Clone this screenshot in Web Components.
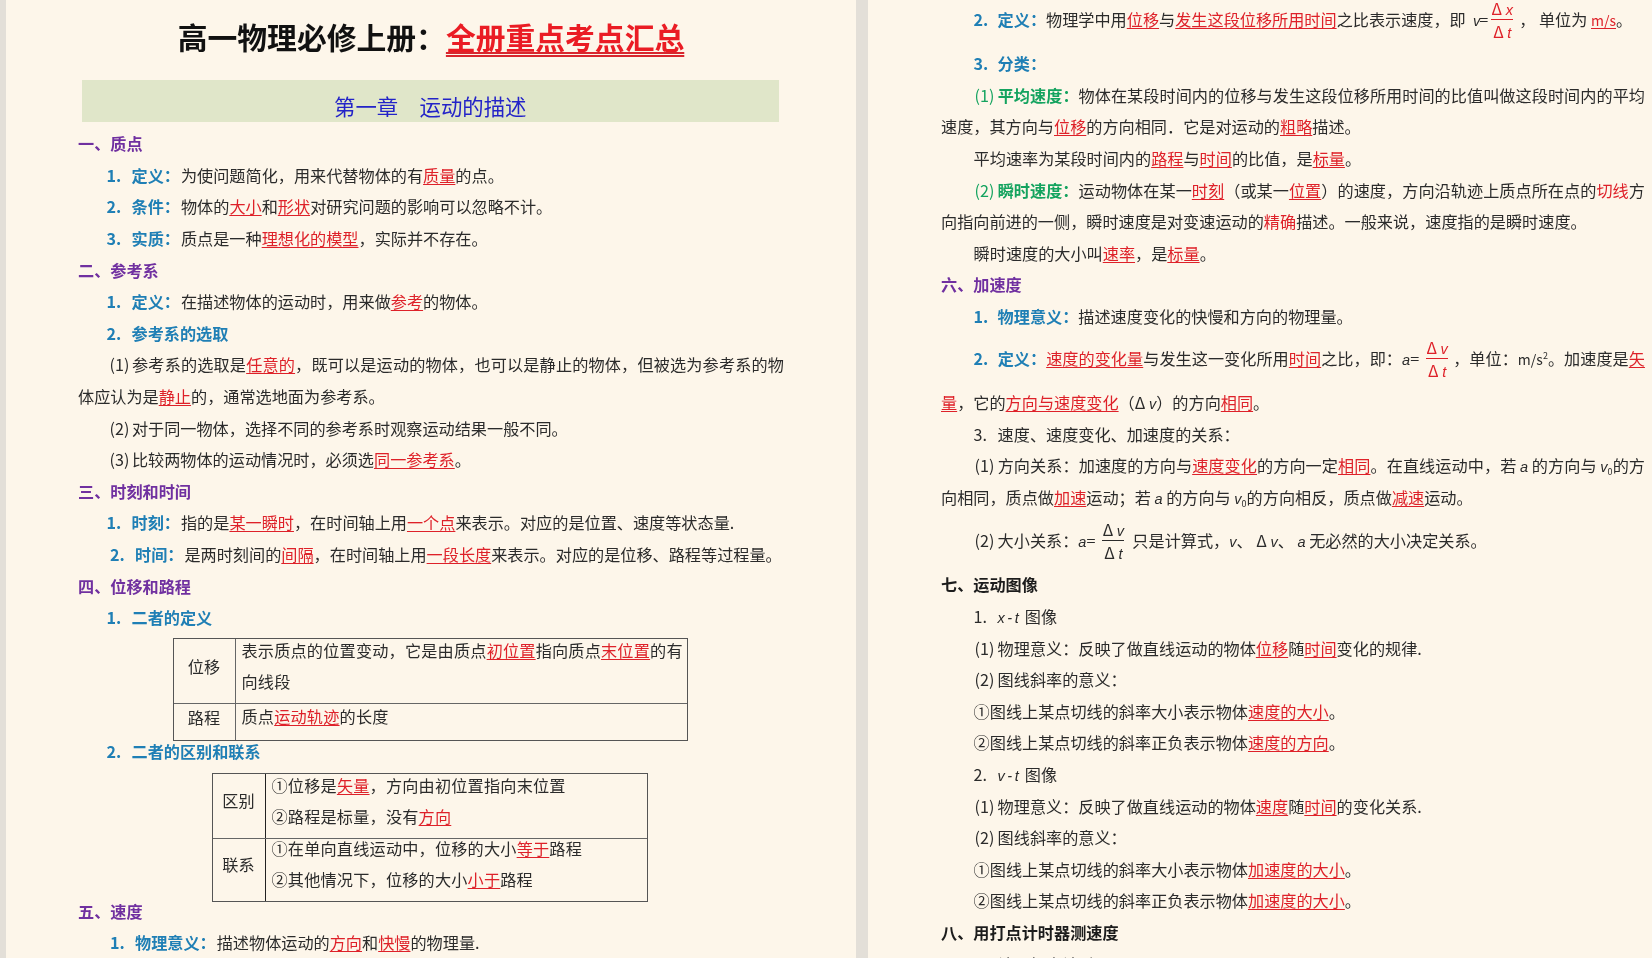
<!DOCTYPE html>
<html lang="zh-CN"><head><meta charset="utf-8"><title>高一物理必修上册</title>
<style>
html,body{margin:0;padding:0;height:958px;overflow:hidden;background:#E3DFD8}
</style></head>
<body>
<script>
function def(name,css,html){
  customElements.define(name,class extends HTMLElement{
    constructor(){super();this.attachShadow({mode:'open'}).innerHTML='<style>'+css+'</style>'+(html||'<slot></slot>');}
  });
}
def('doc-viewer',`:host{display:flex;gap:12px;padding-left:6px;height:958px;overflow:hidden;background:#E3DFD8;
  font-family:"Noto Sans CJK SC","Noto Sans",sans-serif;font-size:16.15px;line-height:31.6px;color:#2b2b2b;filter:blur(.35px)}`);
def('doc-page',`:host{display:block;box-sizing:border-box;background:#FDF6EA;height:958px;overflow:hidden;width:850px;padding:0 72px;--pw:22.4px;--nw:25px;--kg:1px;--pm:0px}
:host([side=right]){width:784px;padding:4.2px 7px 0 73px;--pw:23px;--nw:24px;--kg:0px;--pm:1px}`);
def('doc-title',`:host{display:block;text-align:center;font-size:29.8px;line-height:46px;height:80px;padding-top:13px;box-sizing:border-box;font-weight:700;color:#111;white-space:nowrap}`);
def('chapter-bar',`:host{display:block;margin:0 5px 6.2px 3.5px;height:42px;background:#E0E6C9;text-align:center;color:#2323C8;font-size:21.4px;line-height:52px;white-space:nowrap}`);
def('sec-head',`:host{display:block;font-weight:700;color:#7030A0}:host([tone=black]){color:#1c1c1c}`);
def('item-head',`:host{display:block;font-weight:700;color:#1F7FB5;padding-left:28.5px;white-space:nowrap}`);
def('num-mark',`:host{display:inline-block;width:var(--nw,25px);text-indent:0}`);
def('par-num',`:host{display:inline-block;width:var(--pw,21.6px);margin-left:var(--pm,0);text-indent:0;font-weight:400;white-space:nowrap}`);
def('body-para',`:host{display:block;text-indent:31.5px;white-space:nowrap}
:host([deep]){text-indent:32.6px}
:host([cont]){text-indent:0}
:host([just]){white-space:normal;text-align:justify;text-align-last:justify}`);
def('plain-line',`:host{display:block;padding-left:32.6px;white-space:nowrap}`);
def('lead-item',`:host{display:block;padding-left:28.5px;white-space:nowrap}:host([nudge]){padding-left:32px}:host([deep]){padding-left:32.6px}`);
def('blue-key',`:host{font-weight:700;color:#1F7FB5;margin-right:var(--kg,0)}`);
def('green-key',`:host{font-weight:700;color:#14A35F}`);
def('red-key',`:host{color:#DE2129;text-decoration:underline;text-decoration-thickness:1px;text-underline-offset:2px}
:host([bare]){text-decoration:none}`);
def('unit-sm',`:host{font-size:14px}`);
def('math-i',`:host{font-style:italic;font-family:"Liberation Sans",sans-serif;line-height:0;font-size:14.5px}
:host([wide]){letter-spacing:2.5px}:host([tight]){letter-spacing:-1px}`);
def('double-red',`:host{color:#EA1C24;text-decoration:underline double #D8262E;text-decoration-thickness:1.6px;text-underline-offset:3px}`);
def('frac-box',`:host{display:inline-flex;flex-direction:column;vertical-align:middle;text-align:center;width:22px;margin:-9px 1px -5px;line-height:22px;font-size:16px;text-indent:0;text-align-last:center}
:host([red]){color:#DE2129}
.n{border-bottom:1px solid currentColor}.n,.d{height:22px;white-space:nowrap}`,
`<div class="n"><slot name="n"></slot></div><div class="d"><slot name="d"></slot></div>`);
def('kv-table',`:host{display:block;box-sizing:border-box;border:1px solid #555;white-space:nowrap}`);
def('kv-label',`:host{display:block;text-align:center;border-right:1px solid var(--kb,#666);padding-top:var(--lp,0);height:100%;box-sizing:border-box;padding-right:1px}`);
def('kv-cell',`:host{display:block;padding-left:var(--cp,5.5px);margin-top:var(--ct,-4px);height:0;letter-spacing:.2px}`);
def('kv-row',`:host{display:grid;grid-template-columns:var(--kc);height:var(--rh);border-top:1px solid #666;box-sizing:border-box}:host(:first-child){border-top:0}`);
def('sup-sm',`:host{font-size:9px;vertical-align:6px;line-height:0}`);
def('sub-sm',`:host{font-size:9px;vertical-align:-3px;line-height:0}`);
</script>
<doc-viewer>
<doc-page>
  <doc-title>高一物理必修上册：<double-red>全册重点考点汇总</double-red></doc-title>
  <chapter-bar>第一章　运动的描述</chapter-bar>
  <sec-head>一、质点</sec-head>
  <lead-item><blue-key><num-mark>1.</num-mark>定义：</blue-key>为使问题简化，用来代替物体的有<red-key>质量</red-key>的点。</lead-item>
  <lead-item><blue-key><num-mark>2.</num-mark>条件：</blue-key>物体的<red-key>大小</red-key>和<red-key>形状</red-key>对研究问题的影响可以忽略不计。</lead-item>
  <lead-item><blue-key><num-mark>3.</num-mark>实质：</blue-key>质点是一种<red-key>理想化的模型</red-key>，实际并不存在。</lead-item>
  <sec-head>二、参考系</sec-head>
  <lead-item><blue-key><num-mark>1.</num-mark>定义：</blue-key>在描述物体的运动时，用来做<red-key>参考</red-key>的物体。</lead-item>
  <item-head><num-mark>2.</num-mark>参考系的选取</item-head>
  <body-para just><par-num>(1)</par-num>参考系的选取是<red-key>任意的</red-key>，既可以是运动的物体，也可以是静止的物体，但被选为参考系的物</body-para>
  <body-para cont>体应认为是<red-key>静止</red-key>的，通常选地面为参考系。</body-para>
  <body-para><par-num>(2)</par-num>对于同一物体，选择不同的参考系时观察运动结果一般不同。</body-para>
  <body-para><par-num>(3)</par-num>比较两物体的运动情况时，必须选<red-key>同一参考系</red-key>。</body-para>
  <sec-head>三、时刻和时间</sec-head>
  <lead-item><blue-key><num-mark>1.</num-mark>时刻：</blue-key>指的是<red-key>某一瞬时</red-key>，在时间轴上用<red-key>一个点</red-key>来表示。对应的是位置、速度等状态量.</lead-item>
  <lead-item nudge><blue-key><num-mark>2.</num-mark>时间：</blue-key>是两时刻间的<red-key>间隔</red-key>，在时间轴上用<red-key>一段长度</red-key>来表示。对应的是位移、路程等过程量。</lead-item>
  <sec-head>四、位移和路程</sec-head>
  <item-head><num-mark>1.</num-mark>二者的定义</item-head>
  <kv-table style="--kc:62px 1fr;margin:4.2px 96px -5.1px 95px;width:515px">
    <kv-row style="--rh:63.7px"><kv-label style="--lp:12px">位移</kv-label><kv-cell>表示质点的位置变动，它是由质点<red-key>初位置</red-key>指向质点<red-key>末位置</red-key>的有<br>向线段</kv-cell></kv-row>
    <kv-row style="--rh:37.3px;--ct:-3px"><kv-label style="--lp:0;line-height:26px">路程</kv-label><kv-cell>质点<red-key>运动轨迹</red-key>的长度</kv-cell></kv-row>
  </kv-table>
  <item-head><num-mark>2.</num-mark>二者的区别和联系</item-head>
  <kv-table style="--kc:53px 1fr;--kb:#222;margin:5.5px 0 -5.8px 134px;width:436px">
    <kv-row style="--rh:63.7px"><kv-label style="--lp:11px">区别</kv-label><kv-cell>①位移是<red-key>矢量</red-key>，方向由初位置指向末位置<br>②路程是标量，没有<red-key>方向</red-key></kv-cell></kv-row>
    <kv-row style="--rh:63px;--ct:-6px"><kv-label style="--lp:10px">联系</kv-label><kv-cell>①在单向直线运动中，位移的大小<red-key>等于</red-key>路程<br>②其他情况下，位移的大小<red-key>小于</red-key>路程</kv-cell></kv-row>
  </kv-table>
  <sec-head>五、速度</sec-head>
  <lead-item nudge><blue-key><num-mark>1.</num-mark>物理意义：</blue-key>描述物体运动的<red-key>方向</red-key>和<red-key>快慢</red-key>的物理量.</lead-item>
</doc-page>
<doc-page side="right">
  <lead-item deep style="height:31.6px"><blue-key><num-mark>2.</num-mark>定义：</blue-key>物理学中用<red-key>位移</red-key>与<red-key>发生这段位移所用时间</red-key>之比表示速度，即&nbsp;&nbsp;<math-i tight>v</math-i>=<frac-box red style="margin-left:3px;margin-right:6px"><span slot="n">Δ&nbsp;<math-i>x</math-i></span><span slot="d">Δ&nbsp;<math-i>t</math-i></span></frac-box>，&nbsp;单位为 <red-key><unit-sm>m/s</unit-sm></red-key>。</lead-item>
  <lead-item deep style="margin-top:12.5px"><blue-key><num-mark>3.</num-mark>分类：</blue-key></lead-item>
  <body-para deep just><green-key><par-num>(1)</par-num>平均速度：</green-key>物体在某段时间内的位移与发生这段位移所用时间的比值叫做这段时间内的平均</body-para>
  <body-para cont>速度，其方向与<red-key>位移</red-key>的方向相同．它是对运动的<red-key>粗略</red-key>描述。</body-para>
  <body-para deep>平均速率为某段时间内的<red-key>路程</red-key>与<red-key>时间</red-key>的比值，是<red-key>标量</red-key>。</body-para>
  <body-para deep just><green-key><par-num>(2)</par-num>瞬时速度：</green-key>运动物体在某一<red-key>时刻</red-key>（或某一<red-key>位置</red-key>）的速度，方向沿轨迹上质点所在点的<red-key bare>切线</red-key>方</body-para>
  <body-para cont>向指向前进的一侧，瞬时速度是对变速运动的<red-key bare>精确</red-key>描述。一般来说，速度指的是瞬时速度。</body-para>
  <body-para deep>瞬时速度的大小叫<red-key>速率</red-key>，是<red-key>标量</red-key>。</body-para>
  <sec-head>六、加速度</sec-head>
  <lead-item deep><blue-key><num-mark>1.</num-mark>物理意义：</blue-key>描述速度变化的快慢和方向的物理量。</lead-item>
  <body-para deep just style="margin-top:3.2px;line-height:45px;height:44.5px"><blue-key><num-mark>2.</num-mark>定义：</blue-key><red-key>速度的变化量</red-key>与发生这一变化所用<red-key>时间</red-key>之比，即：<math-i>a</math-i>=<frac-box red style="margin-left:7px;margin-right:5px"><span slot="n">Δ&nbsp;<math-i>v</math-i></span><span slot="d">Δ&nbsp;<math-i>t</math-i></span></frac-box>，单位：<unit-sm>m/s</unit-sm><sup-sm>2</sup-sm>。加速度是<red-key>矢</red-key></body-para>
  <body-para cont style="line-height:45px;height:45px"><red-key>量</red-key>，它的<red-key>方向与速度变化</red-key>（Δ <math-i>v</math-i>）的方向<red-key>相同</red-key>。</body-para>
  <plain-line style="margin-top:-6.6px"><num-mark>3.</num-mark>速度、速度变化、加速度的关系：</plain-line>
  <body-para deep just><par-num>(1)</par-num>方向关系：加速度的方向与<red-key>速度变化</red-key>的方向一定<red-key>相同</red-key>。在直线运动中，若 <math-i>a</math-i> 的方向与 <math-i>v</math-i><sub-sm>0</sub-sm>的方</body-para>
  <body-para cont>向相同，质点做<red-key>加速</red-key>运动；若 <math-i>a</math-i> 的方向与 <math-i>v</math-i><sub-sm>0</sub-sm>的方向相反，质点做<red-key>减速</red-key>运动。</body-para>
  <plain-line style="margin-top:11.4px;margin-bottom:12.9px;height:31.6px"><par-num>(2)</par-num>大小关系：<math-i>a</math-i>=<frac-box style="margin-left:7px;margin-right:8px"><span slot="n">Δ&nbsp;<math-i>v</math-i></span><span slot="d">Δ&nbsp;<math-i>t</math-i></span></frac-box>只是计算式，<math-i>v</math-i>、&nbsp;Δ <math-i>v</math-i>、&nbsp;<math-i>a</math-i> 无必然的大小决定关系。</plain-line>
  <sec-head tone="black">七、运动图像</sec-head>
  <plain-line><num-mark>1.</num-mark><math-i wide>x-t</math-i> 图像</plain-line>
  <plain-line><par-num>(1)</par-num>物理意义：反映了做直线运动的物体<red-key>位移</red-key>随<red-key>时间</red-key>变化的规律.</plain-line>
  <plain-line><par-num>(2)</par-num>图线斜率的意义：</plain-line>
  <plain-line>①图线上某点切线的斜率大小表示物体<red-key>速度的大小</red-key>。</plain-line>
  <plain-line>②图线上某点切线的斜率正负表示物体<red-key>速度的方向</red-key>。</plain-line>
  <plain-line><num-mark>2.</num-mark><math-i wide>v-t</math-i> 图像</plain-line>
  <plain-line><par-num>(1)</par-num>物理意义：反映了做直线运动的物体<red-key>速度</red-key>随<red-key>时间</red-key>的变化关系.</plain-line>
  <plain-line><par-num>(2)</par-num>图线斜率的意义：</plain-line>
  <plain-line>①图线上某点切线的斜率大小表示物体<red-key>加速度的大小</red-key>。</plain-line>
  <plain-line>②图线上某点切线的斜率正负表示物体<red-key>加速度的大小</red-key>。</plain-line>
  <sec-head tone="black">八、用打点计时器测速度</sec-head>
  <plain-line><num-mark>1.</num-mark>认识打点计时器</plain-line>
</doc-page>
</doc-viewer>
</body></html>
